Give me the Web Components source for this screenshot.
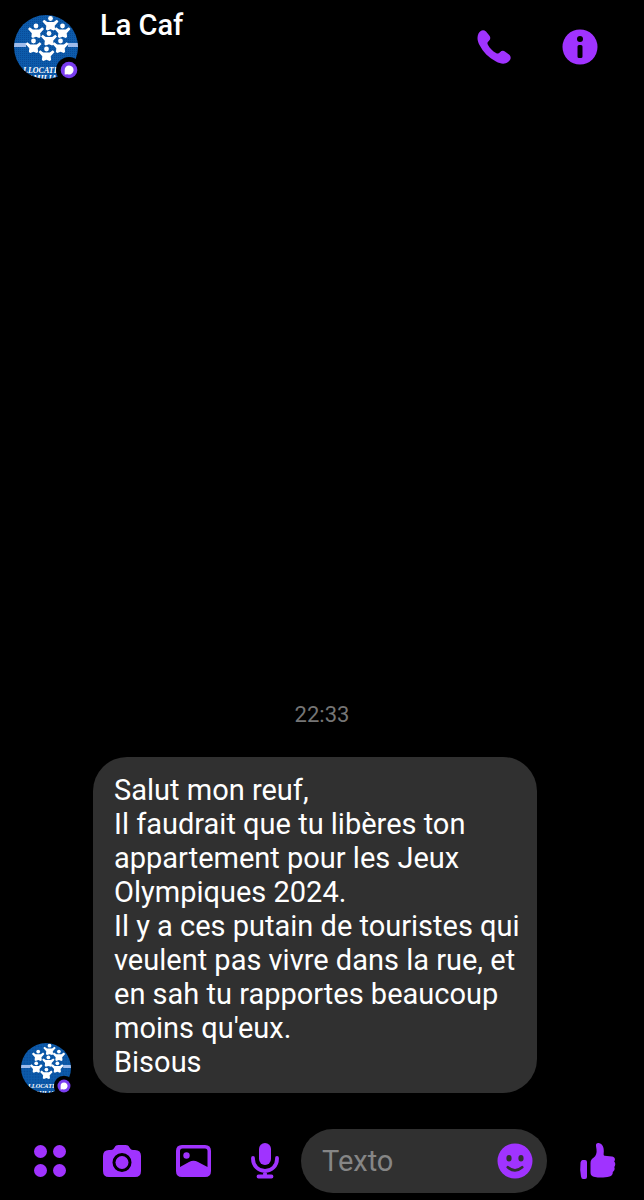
<!DOCTYPE html>
<html lang="fr">
<head>
<meta charset="utf-8">
<meta name="viewport" content="width=device-width, initial-scale=1">
<title>La Caf</title>
<style>
  html, body {
    margin: 0;
    height: 100%;
    background: #000;
  }

  body {
    font-family: Roboto, "Liberation Sans", sans-serif;
    color: #fff;
    --accent: #a033ff;
    --surface: #303030;
    --muted: #757575;
  }
</style>
</head>
<body>
<chat-screen>
  <chat-header slot="header" name="La Caf"></chat-header>
  <chat-time>22:33</chat-time>
  <chat-message>
    <p>Salut mon reuf,</p>
    <p>Il faudrait que tu libères ton appartement pour les Jeux Olympiques 2024.</p>
    <p>Il y a ces putain de touristes qui veulent pas vivre dans la rue, et en sah tu rapportes beaucoup moins qu'eux.</p>
    <p>Bisous</p>
  </chat-message>
  <chat-composer slot="footer"></chat-composer>
</chat-screen>

<script>
(function () {
  function makeTemplate(html) {
    var template = document.createElement('template');
    template.innerHTML = html;
    return template;
  }

  // All icons share a 40x40 box
  var icons = {
    phone: `<path d="M4.500 6.500C6 3.300 9.500 2 12 4.500L15.300 8.500C16.800 10.500 16.500 12.300 15 13.700C13.300 15.200 13 16.300 14 18C16 21.500 18.500 24 22 26C23.700 27 24.700 26.700 26 25.200C27.700 23.500 29.500 23.500 31.200 24.700L35 27.500C37.800 30 36.800 33 34 35C31 37.300 27 37.200 22 34.500C14.500 30.500 9 25 5.500 18C3.200 13.500 2.900 10 4.500 6.500Z"/>`,
    info: `<path fill-rule="evenodd" d="M20 2.500A17.500 17.500 0 1 1 20 37.500A17.500 17.500 0 1 1 20 2.500ZM20 9A3 3 0 1 0 20 15A3 3 0 1 0 20 9ZM19 18Q17.500 18 17.500 19.500V29.500Q17.500 31 19 31H21Q22.500 31 22.500 29.500V19.500Q22.500 18 21 18Z"/>`,
    apps: `<circle cx="10.500" cy="10.500" r="6.500"/><circle cx="29.500" cy="10.500" r="6.500"/><circle cx="10.500" cy="29.500" r="6.500"/><circle cx="29.500" cy="29.500" r="6.500"/>`,
    camera: `<path fill-rule="evenodd" d="M7 9H9C11 9 11.500 8 12.500 6.500C13.500 4.700 14.500 4 16.500 4H23.500C25.500 4 26.500 4.700 27.500 6.500C28.500 8 29 9 31 9H33Q39 9 39 15V30Q39 36 33 36H7Q1 36 1 30V15Q1 9 7 9ZM20 12A9.500 9.500 0 1 0 20 31A9.500 9.500 0 1 0 20 12Z"/><circle cx="20" cy="21.500" r="6.500"/>`,
    photo: `<path fill-rule="evenodd" d="M8 4H31Q37 4 37 10V30Q37 36 31 36H8Q2 36 2 30V10Q2 4 8 4ZM8.500 7.500Q6 7.500 6 10V26L15 21Q19.500 18.500 24 21L33.500 26V10Q33.500 7.500 31 7.500Z"/><circle cx="12.500" cy="14.500" r="3.200"/>`,
    mic: `<rect x="13" y="2" width="12" height="22" rx="6"/><path d="M7 17V18A12 12 0 0 0 31 18V17M19 30V35M12.500 35.500H25.500" fill="none" stroke="currentColor" stroke-width="3.800" stroke-linecap="round"/>`,
    smile: `<path fill-rule="evenodd" d="M20 2.500A17.500 17.500 0 1 1 20 37.500A17.500 17.500 0 1 1 20 2.500ZM14 14A2.600 3.200 0 1 0 14 20.400A2.600 3.200 0 1 0 14 14ZM26 14A2.600 3.200 0 1 0 26 20.400A2.600 3.200 0 1 0 26 14Z"/><path d="M12.800 26.300Q20 32.500 27.200 26.300" fill="none" stroke="#303030" stroke-width="2.800" stroke-linecap="round"/>`,
    like: `<path d="M5.500 19H8Q10 19 10 21V36Q10 38 8 38H6Q4.500 38 4 35.500Q2.700 29 3.500 21.500Q4 19 5.500 19Z"/><path d="M13.500 22C13.500 19.500 14.500 18.300 16.500 16.800C19 14.900 20 12 19.500 8.500L19 5C18.700 2.500 20 1.700 21.800 2C25.500 2.700 27 6.500 26.800 10.500C26.700 12.800 26.200 14.500 27.500 14.800L35 15.500C38 16 38.700 18.500 37.200 20.500C38.800 22 38.500 24.500 37.300 26C38.200 28 37.300 30 35.800 31C36 33.500 34.500 35 32.500 35.500C28 36.700 22 36.800 18 36C15 35.400 13.500 34.500 13.500 31Z"/>`
  };

  class ChatIcon extends HTMLElement {
    constructor() {
      super();
      this.attachShadow({ mode: 'open' });
    }

    connectedCallback() {
      this.shadowRoot.innerHTML = `
        <style>
          :host { display: block; width: 40px; height: 40px; }
          svg { display: block; width: 100%; height: 100%; fill: currentColor; }
        </style>
        <svg viewBox="0 0 40 40" aria-hidden="true">${icons[this.getAttribute('name')]}</svg>
      `;
    }
  }

  // Little people with raised arms, placed by the position of the head
  var people = [[36.5, 3.5], [22, 11], [48.5, 11], [35, 18.5], [19.5, 26], [46.5, 26], [32.5, 34]];
  var figures = people.map(([x, y]) => `
    <g transform="translate(${x} ${y})">
      <circle r="2.400"/>
      <path d="M-8 3L-6.300 1.300L-3.200 3.400H3.200L6.300 1.300L8 3L4.200 7.200L4.600 11L3.200 12L0 10.800L-3.200 12L-4.600 11L-4.200 7.200Z"/>
    </g>`).join('');

  var avatarTemplate = makeTemplate(`
    <style>
      :host { display: block; flex: none; width: 64px; height: 64px; }
      svg { display: block; width: 100%; height: 100%; overflow: visible; }
    </style>
    <svg viewBox="0 0 64 64" role="img" aria-label="La Caf">
      <defs>
        <clipPath id="round"><circle cx="32" cy="32" r="32"/></clipPath>
        <pattern id="weave" width="2" height="2" patternUnits="userSpaceOnUse">
          <rect width="2" height="2" fill="#0d5bab"/>
          <rect width="1" height="1" fill="#084b98"/>
        </pattern>
      </defs>
      <g clip-path="url(#round)">
        <rect width="64" height="64" fill="url(#weave)"/>
        <path d="M0 28H12V32H0ZM54 28H64V32H54Z" fill="#9fbceb"/>
        <g fill="#fff">${figures}</g>
        <g fill="#fff" font-family="Liberation Serif, serif" font-size="8" font-style="italic" font-weight="700">
          <text x="9" y="58">LLOCATI</text>
          <text x="14" y="66">AMILIA</text>
        </g>
      </g>
      <circle cx="55" cy="55" r="13"/>
      <circle cx="55" cy="55" r="8.300" fill="#7a3df0"/>
      <path d="M55 50.500A4.500 4.500 0 1 1 53.500 59.200L50.700 59.500V55A4.400 4.400 0 0 1 55 50.500Z" fill="#fff"/>
    </svg>
  `);

  class ChatAvatar extends HTMLElement {
    constructor() {
      super();
      this.attachShadow({ mode: 'open' });
      this.shadowRoot.appendChild(avatarTemplate.content.cloneNode(true));
    }
  }

  var headerTemplate = makeTemplate(`
    <style>
      :host { display: block; }
      header { display: flex; align-items: center; gap: 22px; padding: 15px 44px 15px 14px; }
      h1 { flex: 1; align-self: flex-start; margin: 0; font-size: 29px; line-height: 20px; font-weight: 500; }
      nav { display: flex; gap: 46px; }
      button { padding: 0; border: 0; background: none; color: var(--accent); cursor: pointer; }
    </style>
    <header>
      <chat-avatar></chat-avatar>
      <h1></h1>
      <nav>
        <button type="button" aria-label="Appeler"><chat-icon name="phone"></chat-icon></button>
        <button type="button" aria-label="Informations"><chat-icon name="info"></chat-icon></button>
      </nav>
    </header>
  `);

  class ChatHeader extends HTMLElement {
    constructor() {
      super();
      this.attachShadow({ mode: 'open' });
      this.shadowRoot.appendChild(headerTemplate.content.cloneNode(true));
    }

    connectedCallback() {
      this.shadowRoot.querySelector('h1').textContent = this.getAttribute('name');
    }
  }

  var timeTemplate = makeTemplate(`
    <style>
      :host { display: block; text-align: center; color: var(--muted); font-size: 22px; line-height: 28px; }
    </style>
    <time><slot></slot></time>
  `);

  class ChatTime extends HTMLElement {
    constructor() {
      super();
      this.attachShadow({ mode: 'open' });
      this.shadowRoot.appendChild(timeTemplate.content.cloneNode(true));
    }
  }

  var messageTemplate = makeTemplate(`
    <style>
      :host { display: flex; align-items: flex-end; gap: 22px; padding: 0 22px 0 21px; }
      chat-avatar { width: 50px; height: 50px; }
      .bubble {
        box-sizing: border-box;
        max-width: 444px;
        padding: 16px 14px 14px 21px;
        border-radius: 34px;
        background: var(--surface);
        font-size: 29px;
        line-height: 34px;
      }
      ::slotted(p) { margin: 0; }
    </style>
    <chat-avatar></chat-avatar>
    <div class="bubble"><slot></slot></div>
  `);

  class ChatMessage extends HTMLElement {
    constructor() {
      super();
      this.attachShadow({ mode: 'open' });
      this.shadowRoot.appendChild(messageTemplate.content.cloneNode(true));
    }
  }

  var composerTemplate = makeTemplate(`
    <style>
      :host { display: block; }
      form { display: flex; align-items: center; padding: 36px 27px 7px 30px; }
      .tools { display: flex; gap: 32px; }
      button { flex: none; padding: 0; border: 0; background: none; color: var(--accent); cursor: pointer; }
      .field {
        display: flex;
        flex: 1;
        align-items: center;
        min-width: 0;
        height: 64px;
        margin: 0 30px 0 15px;
        padding: 0 12px 0 21px;
        box-sizing: border-box;
        border-radius: 32px;
        background: var(--surface);
      }
      input {
        flex: 1;
        min-width: 0;
        padding: 0;
        border: 0;
        outline: 0;
        background: none;
        color: #fff;
        font: inherit;
        font-size: 29px;
        line-height: 34px;
      }
      input::placeholder { color: #868686; opacity: 1; }
    </style>
    <form>
      <div class="tools">
        <button type="button" aria-label="Plus d'options"><chat-icon name="apps"></chat-icon></button>
        <button type="button" aria-label="Appareil photo"><chat-icon name="camera"></chat-icon></button>
        <button type="button" aria-label="Galerie"><chat-icon name="photo"></chat-icon></button>
        <button type="button" aria-label="Message vocal"><chat-icon name="mic"></chat-icon></button>
      </div>
      <div class="field">
        <input type="text" placeholder="Texto" aria-label="Texto">
        <button type="button" aria-label="Emoji"><chat-icon name="smile"></chat-icon></button>
      </div>
      <button type="button" aria-label="J'aime"><chat-icon name="like"></chat-icon></button>
    </form>
  `);

  class ChatComposer extends HTMLElement {
    constructor() {
      super();
      this.attachShadow({ mode: 'open' });
      this.shadowRoot.appendChild(composerTemplate.content.cloneNode(true));
      this.shadowRoot.querySelector('form').addEventListener('submit', function (event) {
        event.preventDefault();
      });
    }
  }

  var screenTemplate = makeTemplate(`
    <style>
      :host { display: flex; flex-direction: column; min-height: 100vh; }
      main { display: flex; flex: 1; flex-direction: column; justify-content: flex-end; gap: 28px; }
    </style>
    <slot name="header"></slot>
    <main><slot></slot></main>
    <slot name="footer"></slot>
  `);

  class ChatScreen extends HTMLElement {
    constructor() {
      super();
      this.attachShadow({ mode: 'open' });
      this.shadowRoot.appendChild(screenTemplate.content.cloneNode(true));
    }
  }

  window.customElements.define('chat-icon', ChatIcon);
  window.customElements.define('chat-avatar', ChatAvatar);
  window.customElements.define('chat-header', ChatHeader);
  window.customElements.define('chat-time', ChatTime);
  window.customElements.define('chat-message', ChatMessage);
  window.customElements.define('chat-composer', ChatComposer);
  window.customElements.define('chat-screen', ChatScreen);
})();
</script>
</body>
</html>
